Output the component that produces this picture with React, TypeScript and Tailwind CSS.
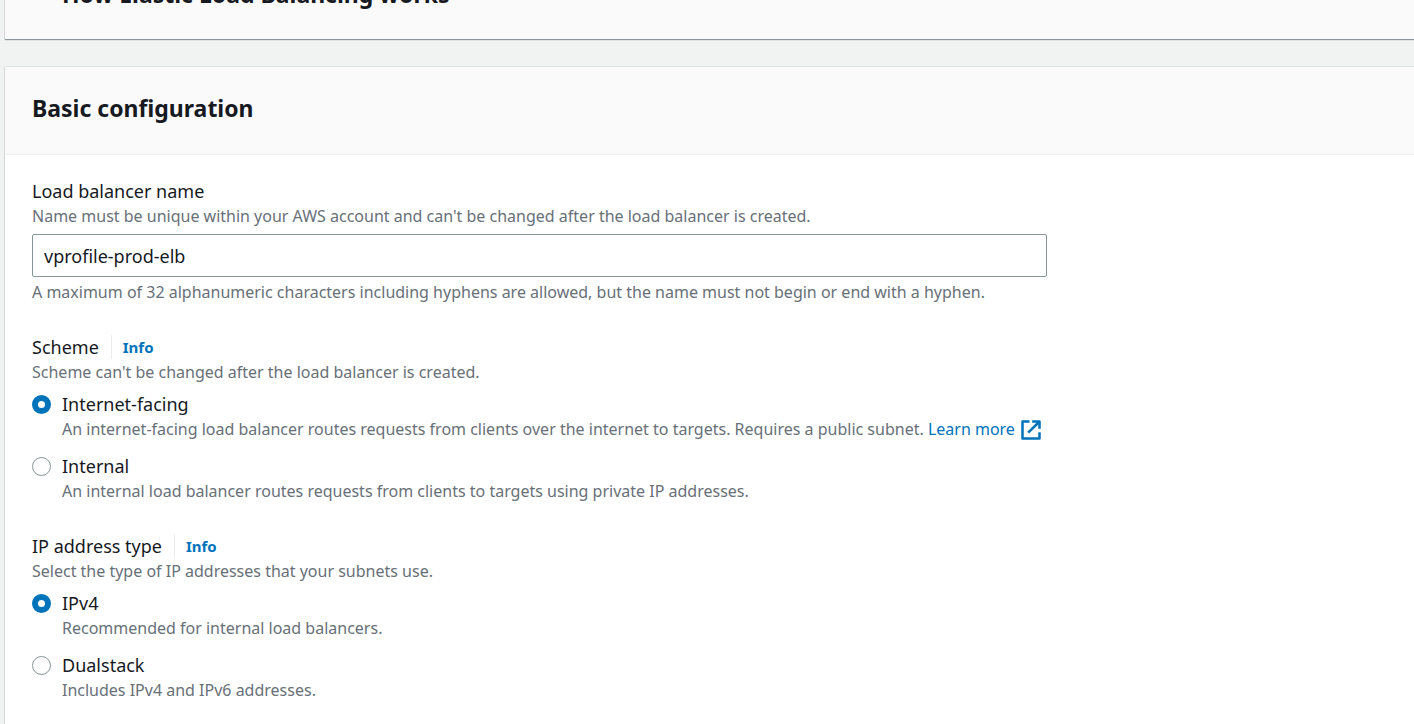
import { useState, type ReactNode } from 'react';

type Option = { value: string; label: string; description: ReactNode };

function ExternalIcon() {
  return (
    <svg viewBox="0 0 20 20" className="ml-1.5 inline-block size-5 align-[-5px]" fill="none" stroke="#0073bb" strokeWidth="2.5" strokeLinejoin="round" aria-hidden="true">
      <path d="M8.5 1.5H1.5v17h17v-6.3" />
      <path d="M11.2 1.5h7.3v7.3" />
      <path d="M18 2 7.2 12.6" />
    </svg>
  );
}

function RadioGroup({ name, title, hint, options }: { name: string; title: string; hint: string; options: Option[] }) {
  const [selected, setSelected] = useState(options[0].value);
  return (
    <section className="mt-[30px]" role="radiogroup" aria-labelledby={`${name}-title`}>
      <div className="flex h-[26px] items-center">
        <h3 id={`${name}-title`} className="text-lg/[26px]">{title}</h3>
        <a href="#info" className="ml-3 border-l border-[#eaeded] pl-[11px] text-[15px]/6 font-bold text-[#0073bb]">Info</a>
      </div>
      <p className="text-base/6 text-[#687078]">{hint}</p>
      <div className="mt-[7px] flex flex-col gap-3">
        {options.map((option) => (
          <div key={option.value} className="flex items-start">
            <input
              type="radio"
              id={`${name}-${option.value}`}
              name={name}
              checked={selected === option.value}
              onChange={() => setSelected(option.value)}
              className="mt-1 size-[19px] shrink-0 appearance-none rounded-full border border-[#879596] bg-white checked:border-[6px] checked:border-[#0073bb]"
            />
            <div className="ml-[11px]">
              <label htmlFor={`${name}-${option.value}`} className="block text-lg/[26px]">{option.label}</label>
              <p className="text-base/6 text-[#687078]">{option.description}</p>
            </div>
          </div>
        ))}
      </div>
    </section>
  );
}

export default function App() {
  const [name, setName] = useState('vprofile-prod-elb');
  return (
    <div className="h-screen overflow-hidden bg-[#f1f3f3] pl-[5px] font-['Noto_Sans','Open_Sans',sans-serif] text-[#16191f]">
      <section className="-mt-12 bg-[#fafafa] pt-[26px] pr-7 pb-[29px] pl-[57px] shadow-[0_1px_1px_0_rgba(0,28,36,0.4),0_0_1px_0_rgba(0,28,36,0.3)]">
        <h2 className="text-[23px]/8 font-bold">How Elastic Load Balancing works</h2>
      </section>
      <section className="mt-7 bg-white pb-12 shadow-[0_1px_1px_0_rgba(0,28,36,0.3),0_0_1px_0_rgba(0,28,36,0.4)]">
        <header className="border-b border-[#eaeded] bg-[#fafafa] px-[27px] pt-[25px] pb-[30px]">
          <h2 className="text-[23px]/8 font-bold">Basic configuration</h2>
        </header>
        <div className="px-[27px] pt-[23px]">
          <label htmlFor="lb-name" className="block text-lg/[26px]">Load balancer name</label>
          <p id="lb-help" className="text-base/6 text-[#687078]">
            Name must be unique within your AWS account and can't be changed after the load balancer is created.
          </p>
          <input
            id="lb-name"
            type="text"
            value={name}
            onChange={(event) => setName(event.target.value)}
            aria-describedby="lb-help lb-constraint"
            className="mt-1.5 block h-[43px] w-full max-w-[1015px] rounded-[2px] border border-[#879596] bg-white px-[11px] text-lg"
          />
          <p id="lb-constraint" className="mt-[3px] text-base/6 text-[#687078]">
            A maximum of 32 alphanumeric characters including hyphens are allowed, but the name must not begin or end with a hyphen.
          </p>
          <RadioGroup
            name="scheme"
            title="Scheme"
            hint="Scheme can't be changed after the load balancer is created."
            options={[
              {
                value: 'internet-facing',
                label: 'Internet-facing',
                description: (
                  <>
                    An internet-facing load balancer routes requests from clients over the internet to targets. Requires a public subnet.{' '}
                    <a href="#learn-more" className="text-[#0073bb]">Learn more<ExternalIcon /></a>
                  </>
                ),
              },
              {
                value: 'internal',
                label: 'Internal',
                description: 'An internal load balancer routes requests from clients to targets using private IP addresses.',
              },
            ]}
          />
          <RadioGroup
            name="ip-type"
            title="IP address type"
            hint="Select the type of IP addresses that your subnets use."
            options={[
              { value: 'ipv4', label: 'IPv4', description: 'Recommended for internal load balancers.' },
              { value: 'dualstack', label: 'Dualstack', description: 'Includes IPv4 and IPv6 addresses.' },
            ]}
          />
        </div>
      </section>
    </div>
  );
}
